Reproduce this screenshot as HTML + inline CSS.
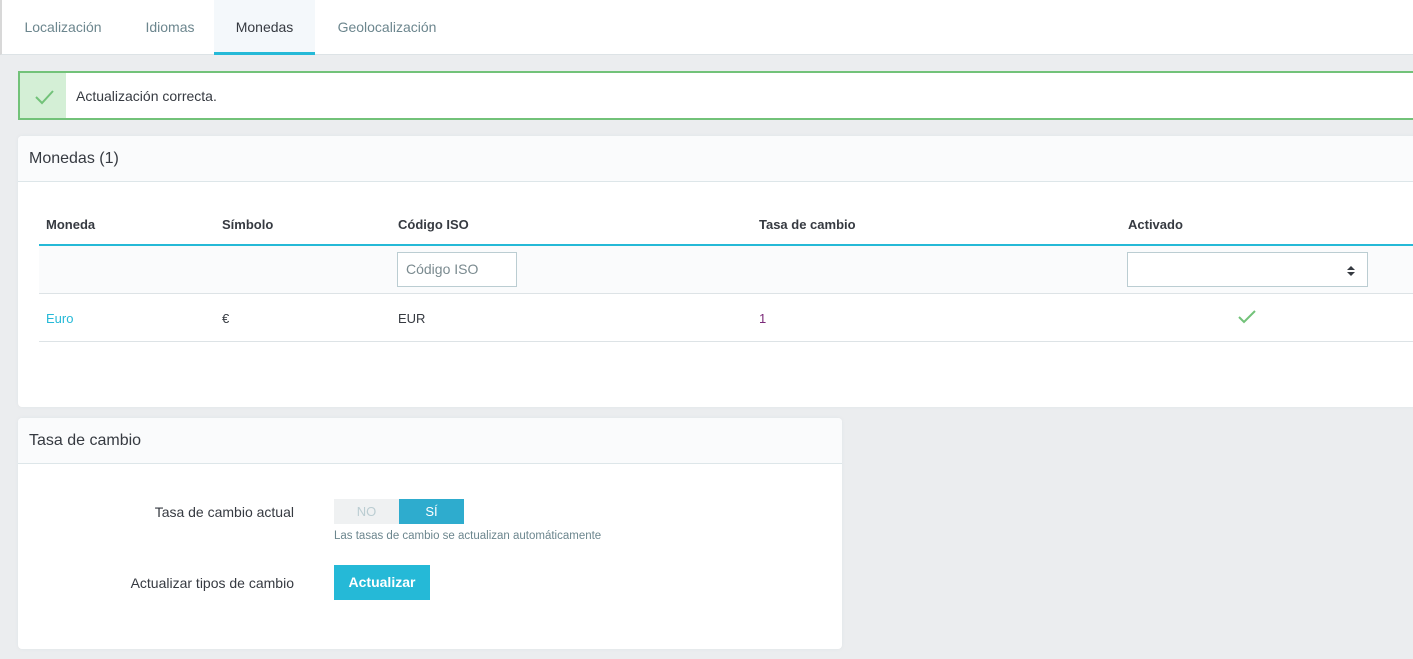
<!DOCTYPE html>
<html><head><meta charset="utf-8"><style>
*{box-sizing:border-box;margin:0;padding:0}
body{width:1413px;height:659px;overflow:hidden;background:#ebedef;font-family:"Liberation Sans",sans-serif;color:#363a41;position:relative;font-size:13px}
.abs{position:absolute}
.tabs{left:0;top:0;width:1413px;height:55px;background:#fff;border-bottom:1px solid #dde3e6;border-left:2px solid #d8d8d8}
.tab{position:absolute;top:0;height:55px;line-height:54px;font-size:14px;color:#6c868e;text-align:center}
.alert{left:18px;top:71px;width:1400px;height:49px;border:2px solid #72c279;background:#fff}
.alert .ic{position:absolute;left:0;top:0;width:46px;height:45px;background:#d4efd6}
.panel{background:#fff;border-radius:4px;box-shadow:0 0 3px #dfe3e6}
.ph{height:46px;background:#fafbfc;border-bottom:1px solid #dde6e9;font-size:16px;line-height:46px;padding-left:11px;border-radius:4px 4px 0 0}
.th{font-weight:bold;font-size:13px;top:217px}
.td{top:311px;font-size:13px}
</style></head><body>
<div class="abs tabs">
<div class="tab" style="left:21px;width:80px">Localización</div>
<div class="tab" style="left:140px;width:56px">Idiomas</div>
<div class="tab" style="left:212px;width:101px;background:#f4f8fb;color:#363a41;border-bottom:3px solid #25b9d7">Monedas</div>
<div class="tab" style="left:333px;width:104px">Geolocalización</div>
</div>
<div class="abs alert"><div class="ic"><svg width="46" height="45"><path d="M16 24l6 6 11-12" stroke="#72c279" stroke-width="2" fill="none"/></svg></div>
<div class="abs" style="left:56px;top:15px;font-size:14px">Actualización correcta.</div></div>

<div class="abs panel" style="left:18px;top:136px;width:1400px;height:271px">
<div class="ph">Monedas (1)</div></div>
<div class="abs th" style="left:46px">Moneda</div>
<div class="abs th" style="left:222px">Símbolo</div>
<div class="abs th" style="left:398px">Código ISO</div>
<div class="abs th" style="left:759px">Tasa de cambio</div>
<div class="abs th" style="left:1128px">Activado</div>
<div class="abs" style="left:39px;top:244px;width:1374px;height:2px;background:#25b9d7"></div>
<div class="abs" style="left:39px;top:246px;width:1374px;height:48px;background:#fafbfc;border-bottom:1px solid #dde3e6"></div>
<div class="abs" style="left:397px;top:252px;width:120px;height:35px;border:1px solid #bbcdd2;background:#fff;color:#7a8a8f;font-size:14px;line-height:33px;padding-left:8px">Código ISO</div>
<div class="abs" style="left:1127px;top:252px;width:241px;height:35px;border:1px solid #bbcdd2;background:#fff"><svg class="abs" style="left:218px;top:12px" width="10" height="12"><path d="M1 5L5 1 9 5zM1 7L5 11 9 7z" fill="#363a41"/></svg></div>
<div class="abs td" style="left:46px;color:#25b9d7">Euro</div>
<div class="abs td" style="left:222px">€</div>
<div class="abs td" style="left:398px">EUR</div>
<div class="abs td" style="left:759px;color:#7b2a79">1</div>
<svg class="abs" style="left:1237px;top:309px" width="20" height="16"><path d="M2 8l5 5 11-11" stroke="#72c279" stroke-width="2" fill="none"/></svg>
<div class="abs" style="left:39px;top:341px;width:1374px;height:1px;background:#dde3e6"></div>

<div class="abs panel" style="left:18px;top:418px;width:824px;height:231px">
<div class="ph">Tasa de cambio</div></div>
<div class="abs" style="left:100px;top:504px;width:194px;text-align:right;font-size:14px">Tasa de cambio actual</div>
<div class="abs" style="left:334px;top:499px;width:65px;height:25px;background:#eff1f2;color:#bbcdd2;text-align:center;line-height:25px">NO</div>
<div class="abs" style="left:399px;top:499px;width:65px;height:25px;background:#2eacce;color:#fff;text-align:center;line-height:25px">SÍ</div>
<div class="abs" style="left:334px;top:530px;font-size:11.5px;color:#6c868e">Las tasas de cambio se actualizan automáticamente</div>
<div class="abs" style="left:80px;top:575px;width:214px;text-align:right;font-size:14px">Actualizar tipos de cambio</div>
<div class="abs" style="left:334px;top:565px;width:96px;height:35px;background:#25b9d7;color:#fff;font-weight:bold;font-size:14px;text-align:center;line-height:35px">Actualizar</div>
</body></html>
